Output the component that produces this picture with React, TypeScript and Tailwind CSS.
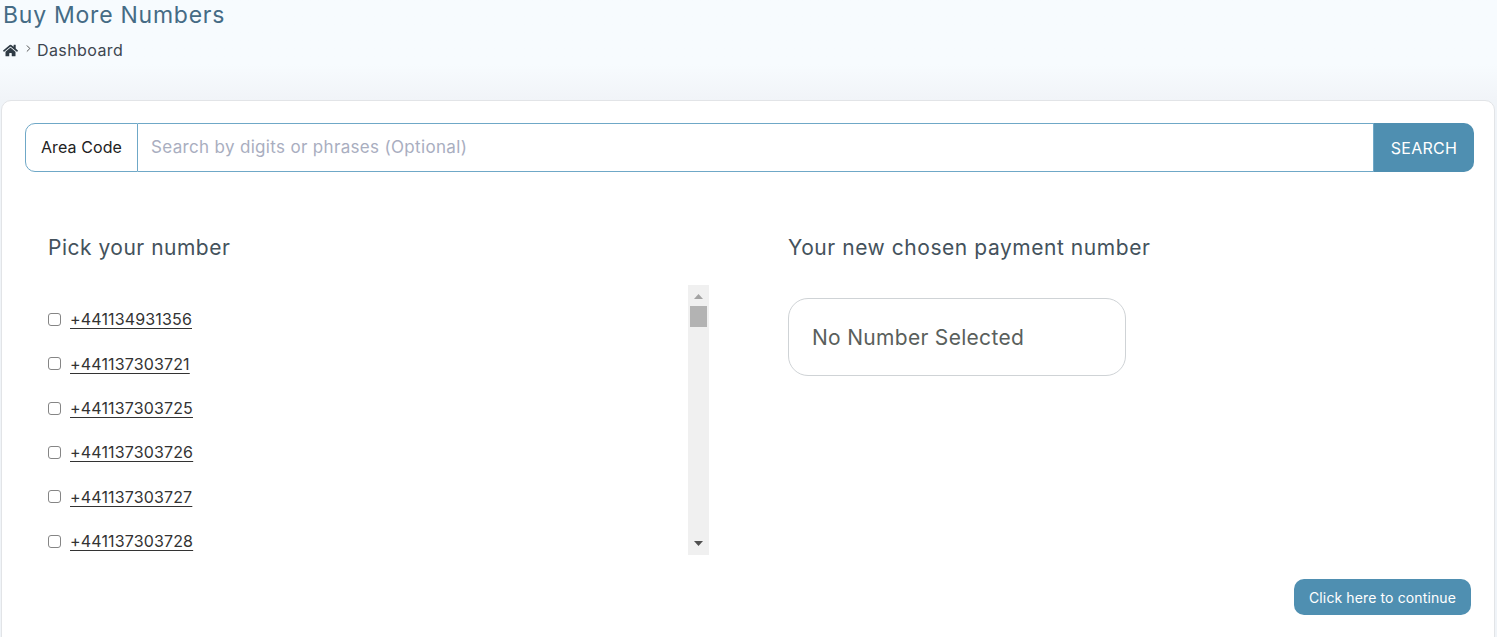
import React from 'react';
import { FaHome } from 'react-icons/fa';
import { ChevronRight } from 'lucide-react';

const numbers = [
    '+441134931356',
    '+441137303721',
    '+441137303725',
    '+441137303726',
    '+441137303727',
    '+441137303728',
];

function App() {
    return (
        <div className="h-[637px] overflow-hidden bg-[#f0f4f8] font-['Inter','Noto_Sans',sans-serif] text-[#333]">
            {/* Header */}
            <div className="h-[100px] bg-gradient-to-b from-[#f7fbfe] from-65% to-[#f1f4f8] pl-[3px]">
                <h1 className="pt-px text-[23px] leading-[28px] tracking-[0.75px] text-[#456b85]">Buy More Numbers</h1>
                <div className="mt-[7px] flex h-[28px] items-center">
                    <FaHome className="h-[15px] w-[15px] text-[#2f3b45]" />
                    <ChevronRight size={11} strokeWidth={2} className="ml-[5px] mb-[3px] text-[#444]" />
                    <span className="ml-[3px] text-[16px] tracking-[0.4px] text-[#3d4650]">Dashboard</span>
                </div>
            </div>

            {/* Card */}
            <div className="ml-px mr-[2px] h-[560px] rounded-t-[10px] border border-[#e2e4e7] bg-white px-[23px] pt-[22px]">
                {/* Search */}
                <div className="flex h-[49px] w-[1449px]">
                    <div className="flex w-[113px] items-center justify-center rounded-l-[10px] border border-[#6fa8c7] pb-px text-[16px] tracking-[0.1px] text-[#222]">
                        Area Code
                    </div>
                    <input
                        placeholder="Search by digits or phrases (Optional)"
                        className="flex-1 border-y border-r border-[#6fa8c7] px-[13px] text-[17px] tracking-[0.33px] outline-none placeholder:text-[#a9aebf]"
                    />
                    <button className="w-[100px] rounded-r-[10px] bg-[#4f8fb1] text-[16px] tracking-[0.3px] text-white">SEARCH</button>
                </div>

                <div className="mt-[62px] flex pl-[23px]">
                    {/* Pick */}
                    <div className="w-[740px]">
                        <h2 className="pt-px text-[21px] leading-[25px] tracking-[0.5px] text-[#44525c]">Pick your number</h2>
                        <div className="mt-[25px] flex h-[270px] w-[661px]">
                            <ul className="h-full flex-1 overflow-hidden pt-[12.1px]">
                                {numbers.map((n) => (
                                    <li key={n} className="flex h-[44.4px] items-center">
                                        <input type="checkbox" className="h-[13px] w-[13px] appearance-none rounded-[3px] border border-[#858585] bg-white" />
                                        <a href="#" className="ml-[9px] text-[16px] tracking-[0.15px] text-[#333] underline underline-offset-[3px]">{n}</a>
                                    </li>
                                ))}
                            </ul>
                            {/* Scrollbar */}
                            <div className="flex w-[21px] flex-col items-center bg-[#f0f0f0]">
                                <svg width="9" height="5" viewBox="0 0 9 5" className="mt-[9px]"><path d="M4.5 0L9 5H0z" fill="#a3a3a3" /></svg>
                                <div className="mt-[7px] h-[21px] w-[17px] bg-[#b3b3b3]" />
                                <svg width="9" height="5" viewBox="0 0 9 5" className="mb-[9px] mt-auto"><path d="M0 0H9L4.5 5z" fill="#505050" /></svg>
                            </div>
                        </div>
                    </div>

                    {/* Chosen */}
                    <div>
                        <h2 className="pt-px text-[21px] leading-[25px] tracking-[0.55px] text-[#44525c]">Your new chosen payment number</h2>
                        <div className="mt-[38px] flex h-[78px] w-[338px] items-center rounded-[20px] border border-[#cfd3d6] pl-[23px] pt-px text-[21px] tracking-[0.3px] text-[#5a5f5c]">
                            No Number Selected
                        </div>
                    </div>
                </div>

                <div className="mt-[24px] flex w-[1446px] justify-end">
                    <button className="h-[36px] w-[177px] rounded-[10px] bg-[#4f8fb1] text-[14px] tracking-[0.12px] text-white">Click here to continue</button>
                </div>
            </div>
        </div>
    );
}

export default App;
